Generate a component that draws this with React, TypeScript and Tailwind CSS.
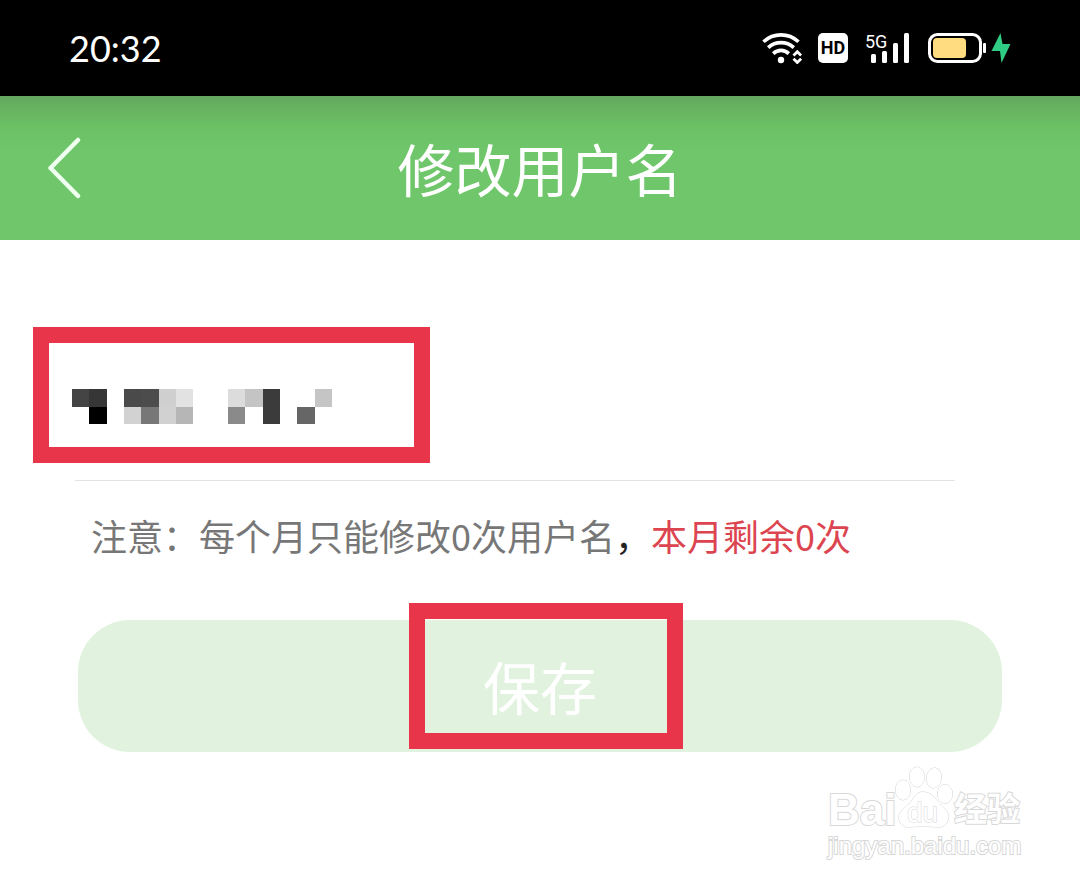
import { useState } from "react";

const WifiIcon = () => (
  <svg width="40" height="31" viewBox="0 0 40 31" fill="none" aria-hidden="true">
    <g stroke="#fff" strokeWidth="3.6">
      <path d="M1.500 8.800C11.500-.4 26.500-.4 36.500 8.800" />
      <path d="M6.200 14.600C13.600 8 24.400 8 31.800 14.600" />
      <path d="M11.200 20.600C15.800 16.300 22.200 16.300 26.800 20.600" />
    </g>
    <circle cx="19" cy="27" r="3.200" fill="#fff" />
    <path d="M31.500 22.500L35.300 18.700L39.100 22.500M31.500 25.700L35.300 29.500L39.100 25.700" stroke="#fff" strokeWidth="2.800" />
  </svg>
);

const SignalIcon = () => (
  <svg
    width="44"
    height="30"
    viewBox="0 0 44 30"
    fill="#fff"
    className="overflow-visible"
    aria-label="5G"
  >
    <text x="-1" y="15" fontSize="18" fontFamily="Roboto, sans-serif">
      5G
    </text>
    <rect x="5" y="21" width="5" height="9" rx="1.5" />
    <rect x="16" y="18" width="5" height="12" rx="1.5" />
    <rect x="27" y="10" width="5" height="20" rx="1.5" />
    <rect x="38" y="0" width="5" height="30" rx="1.5" />
  </svg>
);

const BatteryIcon = () => (
  <svg width="84" height="30" viewBox="0 0 84 30" fill="none" aria-hidden="true">
    <rect x="1.500" y="1.500" width="51" height="27" rx="8" stroke="#fff" strokeWidth="3" />
    <rect x="5" y="5" width="33" height="20" rx="4" fill="#ffdc80" />
    <rect x="55" y="10" width="3" height="10" rx="1" fill="#fff" />
    <path d="M72.500 0L63.500 18H72L73.500 30L82.500 11H74.500Z" fill="#2fcc83" />
  </svg>
);

const StatusBar = () => (
  <div className="flex h-24 items-center justify-between bg-black pl-[69px] pr-[68px] text-white">
    <span className="font-[Lato,sans-serif] text-4xl">20:32</span>
    <div className="flex items-center">
      <WifiIcon />
      <span className="ml-4 flex h-[30px] w-[30px] items-center justify-center rounded-[5px] bg-white font-[Roboto,sans-serif] text-lg font-bold leading-none text-black">
        HD
      </span>
      <span className="ml-[18px]">
        <SignalIcon />
      </span>
      <span className="ml-[18px]">
        <BatteryIcon />
      </span>
    </div>
  </div>
);

const Header = () => (
  <header className="grid h-36 grid-cols-[1fr_auto_1fr] items-center bg-[#70c66b] bg-linear-to-b from-[#64a75f] via-[#6bc064] via-20% to-[#70c66b] to-40% px-12 text-white">
    <button type="button" aria-label="返回" className="justify-self-start">
      <svg width="33" height="62" viewBox="0 0 33 62" fill="none">
        <path
          d="M30 3L2.500 31L30 59"
          stroke="#effff0"
          strokeWidth="4.500"
          strokeLinecap="round"
          strokeLinejoin="round"
        />
      </svg>
    </button>
    <h1 className="pt-2 text-[57px] leading-none">修改用户名</h1>
  </header>
);

// pixelated cells of the hidden name, null is an empty cell
const mosaic = [
  ["#444", "#363636", null, "#4a4a4a", "#4c4c4c", "#cfcfcf", "#e2e2e2", null, null, "#dcdcdc", "#c4c4c4", "#3b3b3b", null, null, "#c5c5c5"],
  [null, "#000", null, "#d2d2d2", "#777", "#d1d1d1", "#b6b6b6", null, null, "#8a8a8a", null, "#3b3b3b", null, "#666", null],
];

const Mosaic = () => (
  <svg
    width="260"
    height="35"
    viewBox="0 0 15 2"
    preserveAspectRatio="none"
    shapeRendering="crispEdges"
    aria-hidden="true"
  >
    {mosaic.map((row, y) =>
      row.map((color, x) =>
        color ? (
          <rect key={`${x}-${y}`} x={x} y={y} width="1" height="1" fill={color} />
        ) : null
      )
    )}
  </svg>
);

const Watermark = () => (
  <div className="w-[194px] text-white [paint-order:stroke_fill] [-webkit-text-stroke:2px_#d8d8d8]">
    <div className="flex h-16 items-end font-['Liberation_Sans','Noto_Sans_CJK_SC',sans-serif] font-bold">
      <span className="w-[66px] text-[44px] leading-10">Bai</span>
      <svg
        width="60"
        height="64"
        viewBox="0 0 60 64"
        fill="#fff"
        stroke="#d4d4d4"
        className="shrink-0"
      >
        <ellipse cx="9" cy="24" rx="7.500" ry="10" />
        <ellipse cx="23" cy="11" rx="7.500" ry="10" />
        <ellipse cx="40" cy="12" rx="7.500" ry="10" transform="rotate(8 40 12)" />
        <ellipse cx="51" cy="28" rx="7.500" ry="9.500" />
        <path d="M29 26C38 26 41 33 46 38C53 44 56 49 54 54C52 60 47 62 42 61C33 60 25 60 17 61C10 62 6 58 5 53C4 47 9 43 15 38C20 33 21 26 29 26Z" />
        <text
          x="13"
          y="56"
          fontSize="28"
          fontWeight="400"
          fontFamily="'Liberation Sans', sans-serif"
        >
          du
        </text>
      </svg>
      <span className="whitespace-nowrap text-[33px] leading-10">经验</span>
    </div>
    <p className="font-['Liberation_Sans',sans-serif] text-2xl leading-8">
      jingyan.baidu.com
    </p>
  </div>
);

export default function App() {
  const [name, setName] = useState("");

  return (
    <div className="bg-white font-[Roboto,'Noto_Sans_CJK_SC',sans-serif]">
      <StatusBar />
      <Header />
      <main>
        <form onSubmit={(e) => e.preventDefault()} className="px-[75px] pt-[87px]">
          <div className="relative mr-[50px] border-b border-[#e2e2e2]">
            <input
              type="text"
              aria-label="用户名"
              className="block h-[153px] w-full text-4xl text-gray-800 focus:outline-none"
              value={name}
              onChange={(e) => setName(e.target.value)}
            />
            <div className="pointer-events-none absolute -left-[42px] top-0 flex h-[136px] w-[397px] items-center border-[16px] border-[#e93549] pl-[23px] pt-[22px]">
              <Mosaic />
            </div>
          </div>
          <p className="mt-7 px-4 font-['Noto_Sans_CJK_SC',sans-serif] text-4xl leading-[52px] text-[#777]">
            注意：每个月只能修改0次用户名
            <span className="text-[#222]">，</span>
            <span className="text-[#dc4550]">本月剩余0次</span>
          </p>
          <div className="relative mx-[3px] mt-[59px]">
            <button
              type="submit"
              className="h-[132px] w-full rounded-[52px] bg-[#e1f3df] pt-2 text-[57px] leading-none text-white"
            >
              保存
            </button>
            <div className="pointer-events-none absolute -top-[17px] left-1/2 ml-[6px] h-[146px] w-[274px] -translate-x-1/2 border-[16px] border-[#e93549]" />
          </div>
        </form>
        <div className="flex justify-end pb-5 pr-[58px] pt-[14px]">
          <Watermark />
        </div>
      </main>
    </div>
  );
}
